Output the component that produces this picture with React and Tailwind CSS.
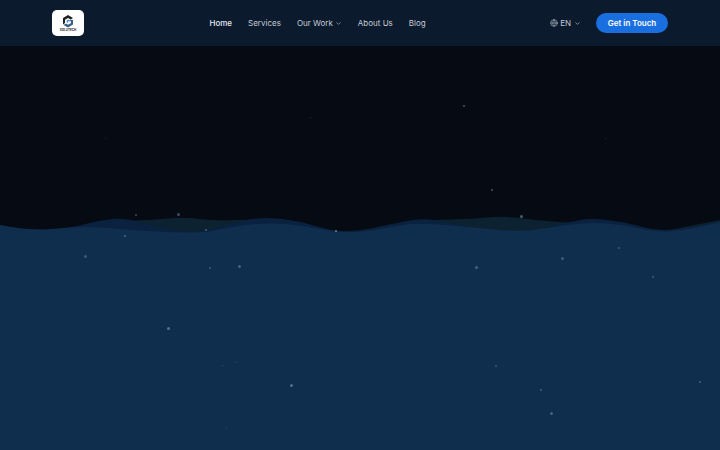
import { ChevronDown, Globe } from 'lucide-react'

const navItems = [
    { label: 'Home', active: true },
    { label: 'Services' },
    { label: 'Our Work', caret: true },
    { label: 'About Us' },
    { label: 'Blog' },
]

// particles, x/y in page pixels
const stars = [
    [463, 105, 2, 0.4], [310, 117, 1, 0.25], [105, 138, 1, 0.2], [605, 138, 1, 0.2],
    [491, 189, 2, 0.4], [135, 214, 2, 0.35], [177, 213, 3, 0.35], [205, 229, 2, 0.4],
    [124, 235, 2, 0.4], [335, 230, 2, 0.6], [520, 215, 3, 0.45], [84, 255, 3, 0.3],
    [209, 267, 2, 0.3], [238, 265, 3, 0.35], [475, 266, 3, 0.35], [561, 257, 3, 0.3],
    [618, 247, 2, 0.3], [652, 276, 2, 0.3], [167, 327, 3, 0.45], [222, 365, 1, 0.3],
    [236, 362, 1, 0.3], [290, 384, 3, 0.45], [495, 365, 2, 0.3], [540, 389, 2, 0.35],
    [699, 381, 2, 0.35], [550, 412, 3, 0.35], [226, 428, 1, 0.25],
]

// wave crests, [x, y] inside the 30px tall strip
const backWave = [
    [0, 12], [40, 16], [80, 12], [120, 6], [150, 5], [185, 2], [215, 6], [255, 4], [290, 6], [330, 16],
    [360, 16], [400, 7], [430, 5], [470, 4], [505, 1], [535, 5], [570, 8], [610, 6], [660, 17], [690, 11], [720, 5],
]
const midWave = [
    [0, 10], [35, 17], [75, 12], [100, 5], [125, 3], [150, 10], [175, 16], [205, 17], [240, 6], [265, 2],
    [300, 6], [335, 17], [365, 16], [400, 7], [425, 3], [455, 9], [490, 16], [530, 17], [565, 8], [590, 3],
    [625, 7], [660, 17], [695, 12], [720, 6],
]
const frontWave = [
    [0, 10], [30, 16], [70, 12], [100, 12], [130, 15], [165, 17], [205, 18], [240, 10], [272, 8], [300, 10],
    [335, 17], [365, 17], [400, 10], [422, 8], [470, 12], [520, 17], [552, 12], [590, 7], [625, 10], [660, 18], [695, 13], [720, 7],
]

// smooth line through the midpoints, closed along the bottom of the strip
function wavePath(points) {
    let d = `M${points[0][0]} ${points[0][1]}`
    for (let i = 1; i < points.length - 1; i++) {
        const midX = (points[i][0] + points[i + 1][0]) / 2
        const midY = (points[i][1] + points[i + 1][1]) / 2
        d += `Q${points[i][0]} ${points[i][1]} ${midX} ${midY}`
    }
    const last = points[points.length - 1]
    return `${d}L${last[0]} ${last[1]}V30H0Z`
}

function Logo() {
    return (
        <div className="w-8 h-[26px] bg-white rounded-[5px] flex flex-col items-center justify-center">
            <svg width="12" height="13" viewBox="0 0 12 13" className="blur-[0.3px]">
                <path d="M6 0 11 3 8.6 4.4 6 3 3 4.8V8L1 9.4V3Z" fill="#222" />
                <path d="M1.5 10 4 8.6 6 9.8 9 8V6.2H6.4L8.8 4.8 11 5V9.6L6 12.6Z" fill="#3b5f86" />
                <path d="M4.6 5.4 6.2 4.4 8 5.4 6 6.4 6 8 4.6 7.2Z" fill="#4a90d9" />
            </svg>
            <span className="text-[3px] leading-[4px] font-bold text-[#222]">SOLUTECH</span>
        </div>
    )
}

export default function App() {
    return (
        <div className="relative w-[720px] h-[450px] overflow-hidden flex flex-col bg-[#050a13] font-['Inter',sans-serif]">

            {/* NAV */}
            <nav className="h-[46px] shrink-0 bg-[#0b1a2d] px-[52px] flex items-center justify-between">
                <Logo />
                <div className="flex items-center gap-4 ml-[1px]">
                    {navItems.map(item => (
                        <a
                            key={item.label}
                            className={`flex items-center gap-[2px] text-[8px] ${item.active ? 'font-medium text-[#e5e9ee]' : 'text-[#c6cdd7]'}`}
                        >
                            {item.label}
                            {item.caret && <ChevronDown size={7} strokeWidth={2} />}
                        </a>
                    ))}
                </div>
                <div className="flex items-center gap-[15px]">
                    <div className="flex items-center gap-[2px] text-[8px] text-[#c6cdd7]">
                        <Globe size={8} strokeWidth={1.6} />
                        EN
                        <ChevronDown size={7} strokeWidth={2} className="ml-[1px]" />
                    </div>
                    <button className="h-5 w-[72px] rounded-full bg-[#1a6fe0] text-white text-[8px] font-semibold">
                        Get in Touch
                    </button>
                </div>
            </nav>

            {/* Hero */}
            <div className="h-[169px] shrink-0" />

            {/* Waves */}
            <svg width="720" height="30" viewBox="0 0 720 30" className="block shrink-0">
                <path d={wavePath(backWave)} fill="#0c2231" />
                <path d={wavePath(midWave)} fill="#0a2140" />
                <path d={wavePath(frontWave)} fill="#0f2d4d" />
            </svg>

            {/* Lower water */}
            <div className="flex-1 bg-[#0f2d4d]" />

            {/* Particles */}
            {stars.map(([x, y, size, opacity], i) => (
                <span
                    key={i}
                    className="absolute rounded-full bg-[#9fc4e8] blur-[0.5px]"
                    style={{ left: x, top: y, width: size, height: size, opacity }}
                />
            ))}
        </div>
    )
}
